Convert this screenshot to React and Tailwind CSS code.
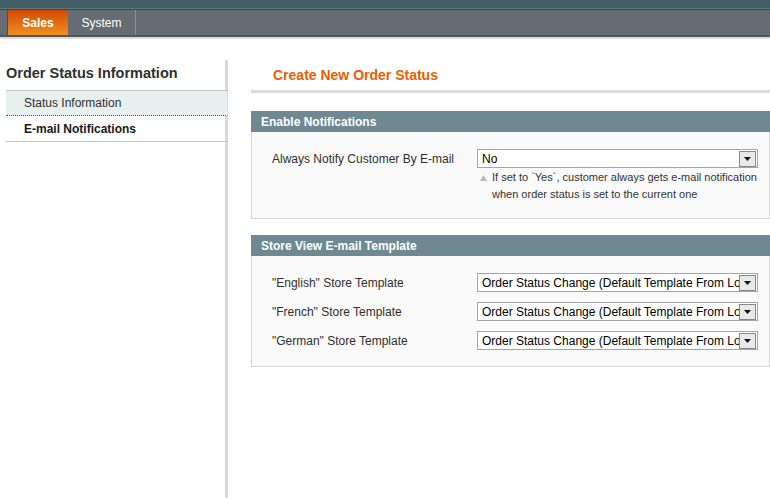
import React from 'react'

const font = { fontFamily: '"Liberation Sans", Arial, sans-serif' }

const Arrow = () => (
  <span className="flex items-center justify-center w-[17px] h-[16px] border border-[#888] bg-[#e9e9e9] mr-px shrink-0">
    <svg width="7" height="4" viewBox="0 0 7 4"><path d="M0 0h7L3.5 4z" fill="#111" /></svg>
  </span>
)

const Select = ({ value }) => (
  <div className="w-[281px] h-[19px] border border-[#a5a5a5] bg-white flex items-center justify-between">
    <span className="pl-[4px] text-[12px] text-black whitespace-nowrap overflow-hidden flex-1">{value}</span>
    <Arrow />
  </div>
)

const Header = ({ title }) => (
  <div className="h-[21px] bg-[#6f8992] pl-[10px] flex items-center text-[12px] font-bold text-white">{title}</div>
)

const stores = ['"English" Store Template', '"French" Store Template', '"German" Store Template']

export default function App() {
  return (
    <div className="w-[770px] h-[498px] bg-white overflow-hidden text-[#2f2f2f]" style={font}>
      {/* top nav */}
      <div className="h-[8px] bg-[#435f66]" />
      <div className="h-px bg-[#5d7b82]" />
      <div className="h-[28px] bg-[#666d72] border-t border-[#3a4448] border-b-2 border-b-[#4f5559] flex">
        <div className="w-[8px] border-r border-[#4a5155]" />
        <div className="w-[60px] bg-gradient-to-b from-[#d24606] to-[#ee901d] text-white font-bold text-[12px] flex items-center justify-center">Sales</div>
        <div className="w-[68px] border-r border-[#8a9094] text-white text-[12px] flex items-center justify-center">System</div>
      </div>
      <div className="h-[2px] bg-[#dcdcdc]" />

      <div className="flex">
        {/* sidebar */}
        <div className="w-[228px] pl-[6px] pt-[2px] mt-[21px] h-[438px] border-r-[3px] border-[#d9d9d9]">
          <h3 className="text-[14.5px] font-bold text-[#2f2f2f] h-[28px] leading-[22px]">Order Status Information</h3>
          <div className="border-t border-[#c5c5c5] mr-[-3px]">
            <div className="h-[25px] bg-[#e7efef] border-b border-dotted border-[#555] pl-[18px] flex items-center text-[12px] text-[#2f2f2f] border-r border-r-[#c5cdcd]">Status Information</div>
            <div className="h-[26px] border-b border-[#c5c5c5] pl-[18px] flex items-center text-[12px] font-bold text-[#1a1a1a]">E-mail Notifications</div>
          </div>
        </div>

        {/* main */}
        <div className="flex-1 pl-[23px] pt-[28px]">
          <div className="border-b-[3px] border-[#dcdcdc] h-[26px] pl-[22px]">
            <h3 className="text-[14px] font-bold text-[#eb5e00] leading-[16px]">Create New Order Status</h3>
          </div>

          <div className="mt-[18px]">
            <Header title="Enable Notifications" />
            <div className="bg-[#fafafa] border border-t-0 border-[#d6d6d6] h-[87px] pt-[17px] pl-[20px] flex">
              <div className="w-[205px] text-[12px] pt-[1px]">Always Notify Customer By E-mail</div>
              <div>
                <Select value="No" />
                <div className="flex items-start text-[11px] text-[#333] leading-[17px] mt-[1px]">
                  <svg width="7" height="6" viewBox="0 0 7 6" className="mt-[6px] ml-[3px] mr-[5px]"><path d="M3.5 0L7 6H0z" fill="#bbb" /></svg>
                  <span>If set to `Yes`, customer always gets e-mail notification<br />when order status is set to the current one</span>
                </div>
              </div>
            </div>
          </div>

          <div className="mt-[16px]">
            <Header title="Store View E-mail Template" />
            <div className="bg-[#fafafa] border border-t-0 border-[#d6d6d6] h-[111px] pt-[17px] pl-[20px] flex flex-col gap-[10px]">
              {stores.map((s, i) => (
                <div key={i} className="flex items-center">
                  <div className="w-[205px] text-[12px]">{s}</div>
                  <Select value="Order Status Change (Default Template From Locale)" />
                </div>
              ))}
            </div>
          </div>
        </div>
      </div>
    </div>
  )
}
